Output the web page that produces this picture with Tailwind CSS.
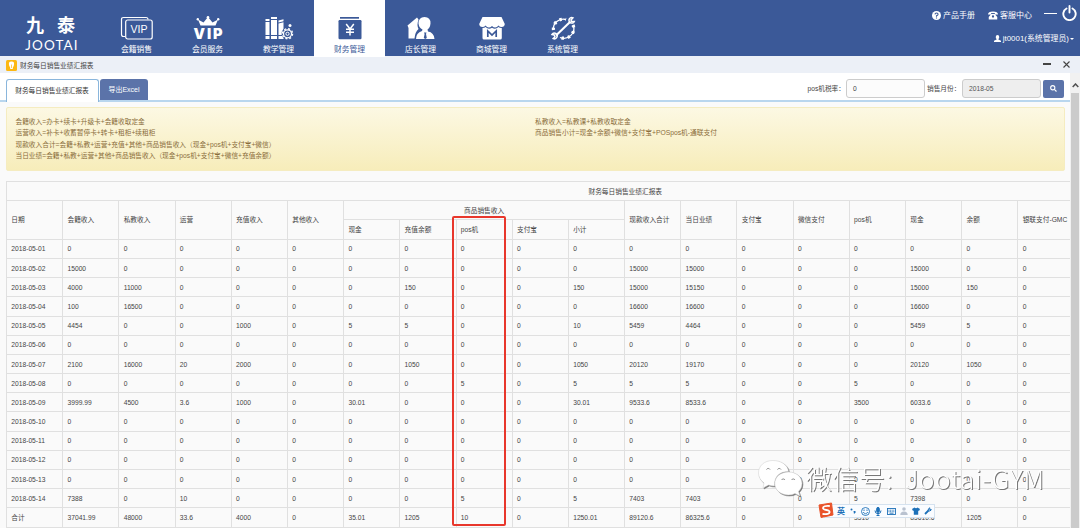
<!DOCTYPE html>
<html lang="zh-CN">
<head>
  <meta charset="UTF-8">
  <title>财务每日销售业绩汇报表</title>
  <script src="https://cdn.jsdelivr.net/npm/@tailwindcss/browser@4"></script>
</head>
<body class="relative w-[1080px] h-[528px] overflow-hidden bg-[#fafafa] font-['Liberation_Sans','Noto_Sans_CJK_SC',sans-serif] text-[6.7px] leading-[11px] text-[#444]">

  <!-- Header -->
  <header class="flex h-[56px] bg-[#3b5998] text-white">
    <div class="w-[101px] pt-[14px] text-center">
      <div class="flex justify-center gap-[13px] text-[18px] leading-[24px] font-bold"><span>九</span><span>泰</span></div>
      <div class="pl-[3px] text-[13.5px] leading-[14px] tracking-[1.1px] font-['Lato',sans-serif]">JOOTAI</div>
    </div>

    <!-- Main menu -->
    <nav class="flex text-[7.8px] leading-[10px]">
      <a class="flex w-[71px] flex-col items-center pt-[15px]">
        <svg class="h-[26px] w-[34px]" viewBox="0 0 34 26" fill="none" stroke="#fff" stroke-width="1.2">
          <path d="M5 21.500H3.500Q1.500 21.500 1.500 19.500V4.500Q1.500 2.500 3.500 2.500H26Q28 2.500 28 4.500"/>
          <rect x="5.700" y="5" width="26.500" height="19" rx="2"/>
          <text x="10.500" y="18" font-size="10.500" textLength="17" lengthAdjust="spacingAndGlyphs" fill="#fff" stroke="none">VIP</text>
        </svg>
        <span class="mt-[4px]">会籍销售</span>
      </a>
      <a class="flex w-[71px] flex-col items-center pt-[15px]">
        <svg class="h-[26px] w-[34px] overflow-visible" viewBox="0 0 34 26" fill="#fff">
          <path d="M7 4.500L12.500 7.500L17 2L21.500 7.500L27 4.500L24.500 10.500H9.500Z"/>
          <circle cx="6.800" cy="4.200" r="1.200"/><circle cx="17" cy="2.300" r="1.300"/><circle cx="27.200" cy="4.200" r="1.200"/>
          <text x="2.500" y="24" font-family="Inter" font-weight="900" font-size="14.500" textLength="29">VIP</text>
        </svg>
        <span class="mt-[4px]">会员服务</span>
      </a>
      <a class="flex w-[71px] flex-col items-center pt-[15px]">
        <svg class="h-[26px] w-[34px]" viewBox="0 0 34 26" fill="#fff">
          <path d="M3.500 4h4v2h-4zM3.500 7h4v13h-4zM3.500 21h4v3h-4zM9 2h6v2H9zM9 5h6v15H9zM9 21h6v3H9zM16.500 5.500l5-1.200v2l-5 1.200zM16.500 8.500l5-1.200v6.500q-2.500 3-1.800 6.200h-3.200zM16.500 21h3.700l1.600 3h-5.300z"/>
          <circle cx="25.500" cy="18.800" r="4" fill="none" stroke="#fff" stroke-width="1.200"/>
          <circle cx="25.500" cy="18.800" r="5.100" fill="none" stroke="#fff" stroke-width="1.300" stroke-dasharray="2 2"/>
          <circle cx="25.500" cy="18.800" r="1.600" fill="none" stroke="#fff"/>
          <circle cx="28" cy="10.500" r="1.500"/>
        </svg>
        <span class="mt-[4px]">教学管理</span>
      </a>
      <a class="flex h-[57px] w-[71px] flex-col items-center bg-white pt-[15px] text-[#3b5998]">
        <svg class="h-[26px] w-[34px]" viewBox="0 0 34 26" fill="#3b5998">
          <rect x="7" y="2" width="19" height="1.700"/>
          <rect x="5.500" y="5" width="23" height="19.300" rx="1.200"/>
          <path d="M13.200 9L17 14L20.800 9M17 14V20.500M13 14.300H21M13 17.300H21" fill="none" stroke="#fff" stroke-width="1.500"/>
        </svg>
        <span class="mt-[4px]">财务管理</span>
      </a>
      <a class="flex w-[71px] flex-col items-center pt-[15px]">
        <svg class="h-[26px] w-[34px]" viewBox="0 0 34 26" fill="#fff">
          <path d="M3.500 10.500L13 2.500L14.500 4.500Q12.500 10 14.500 14Q11 17 10.500 23.500H4.500V13Z"/>
          <path d="M14.500 8.500Q14.500 2 20.500 2Q26.700 2 26.500 8.500Q26 13 23.500 14.500L24 16.500Q30 17.500 30.500 24H12Q12 18 18 16L18.500 14.500Q15 13 14.500 8.500Z"/>
          <path d="M20 17.500h2.500l-.5 1.500.8 4-1.500 1-1.500-1 .8-4z" fill="#3b5998"/>
        </svg>
        <span class="mt-[4px]">店长管理</span>
      </a>
      <a class="flex w-[71px] flex-col items-center pt-[15px]">
        <svg class="h-[26px] w-[34px]" viewBox="0 0 34 26" fill="#fff">
          <path d="M7.500 2H26.500L29.800 9Q29.500 12 26.700 12Q24.500 12 23.500 10.500Q22 12.500 20.200 12.500Q18.500 12.500 17 11Q15.500 12.500 13.800 12.500Q12 12.500 10.500 10.500Q9.500 12 7.300 12Q4.500 12 4.200 9Z"/>
          <path d="M7.500 13Q9.500 13 10.500 12Q13.500 15 17 12.700Q20.500 15 23.500 12Q24.500 13 26.800 13V23Q26.800 24.500 25.300 24.500H9Q7.500 24.500 7.500 23Z"/>
          <path d="M12.800 22V16L17 20L21.200 16V22" fill="none" stroke="#3b5998" stroke-width="1.700"/>
        </svg>
        <span class="mt-[4px]">商城管理</span>
      </a>
      <a class="flex w-[71px] flex-col items-center pt-[15px]">
        <svg class="h-[26px] w-[34px]" viewBox="0 0 34 26" fill="none" stroke="#fff">
          <path d="M7.500 15A10 9.500 0 0 1 20 4.500M27 10A10 9.500 0 0 1 14 22.500" stroke-width="1.300"/>
          <path d="M7.500 15A10 9.500 0 0 1 20 4.500M27 10A10 9.500 0 0 1 14 22.500" stroke-width="3.200" stroke-dasharray="2.500 3.700"/>
          <path d="M10 20.500L24.500 6.500" stroke-width="2.100"/>
          <path d="M27 2.800A2.800 2.800 0 1 0 28.300 6.500L25.500 6.300L25 5Z" stroke-width="1.500"/>
          <path d="M6 19.500A2.800 2.800 0 1 1 7.200 23.500L9 21.800L8.200 20Z" stroke-width="1.500"/>
        </svg>
        <span class="mt-[4px]">系统管理</span>
      </a>
    </nav>

    <!-- User links -->
    <div class="ml-auto flex flex-col items-end pr-[3px] text-[8px]">
      <div class="flex h-[30px] items-center">
        <svg class="mr-[2px] h-[9px] w-[9px]" viewBox="0 0 16 16"><circle cx="8" cy="8" r="8" fill="#fff"/><path d="M5.300 6Q5.500 3.500 8 3.500Q10.800 3.500 10.700 6Q10.600 7.300 8 8.500V10M8 11.500V13.500" fill="none" stroke="#3b5998" stroke-width="2"/></svg>
        <span>产品手册</span>
        <svg class="mr-[2px] ml-[13px] h-[9px] w-[10px]" viewBox="0 0 20 18" fill="#fff"><path d="M0 7Q0 1 10 1Q20 1 20 7H14V4.500Q10 3.500 6 4.500V7ZM6.500 6H13.500L18.500 12V17H1.500V12Z"/><circle cx="10" cy="11" r="2.300" fill="#3b5998"/></svg>
        <span>客服中心</span>
        <span class="mb-[3px] ml-[12px] h-[1.500px] w-[13px] bg-white"></span>
        <svg class="ml-[5px] mb-[5px] h-[16px] w-[15px]" viewBox="0 0 15 16" fill="none" stroke="#fff" stroke-width="1.900" stroke-linecap="round"><path d="M4.500 3.500A6.200 6.200 0 1 0 10.500 3.500M7.500 1V7.500"/></svg>
      </div>
      <div class="flex h-[17px] items-center pr-[3px]">
        <svg class="mr-[2px] h-[7px] w-[7px]" viewBox="0 0 14 14" fill="#fff"><path d="M7 0Q10.500 0 10.500 4Q10.500 6.500 8.800 8V9L14 11.500V14H0V11.500L5.200 9V8Q3.500 6.500 3.500 4Q3.500 0 7 0Z"/></svg>
        <span class="text-[7.900px]">jt0001(系统管理员)</span>
        <span class="ml-[1px] border-x-2 border-t-2 border-x-transparent border-t-white"></span>
      </div>
    </div>
  </header>

  <!-- Page title -->
  <div class="flex h-[17px] items-center bg-[#ecf0f7] pr-[10px] pl-[6px]">
    <svg class="mt-[2px] h-[11px] w-[11px]" viewBox="0 0 11 11"><rect width="11" height="11" rx="1.500" fill="#fcb813"/><path d="M4.300 9Q4.300 7.200 3.300 6Q1.800 1.600 5.500 1.600Q9.200 1.600 7.700 6Q6.700 7.200 6.700 9Z" fill="#fff"/><path d="M5.500 4.500V8" stroke="#fcb813" stroke-width=".7"/></svg>
    <span class="ml-[3px] mt-[2px]">财务每日销售业绩汇报表</span>
    <span class="ml-auto mb-px h-[1.200px] w-[8px] bg-[#444]"></span>
    <svg class="ml-[12px] mb-px h-[7px] w-[7px]" viewBox="0 0 7 7" stroke="#444" stroke-width="1.100"><path d="M.5 .5L6.500 6.500M6.500 .5L.5 6.500"/></svg>
  </div>

  <div class="flex h-[455px]">
    <main class="w-[1070px] overflow-hidden">
      <!-- Tabs and filters -->
      <div class="flex h-[29px] items-end border-b-2 border-[#b9d6ee] bg-white pl-[6px]">
        <div class="-mb-[2px] flex h-[23px] w-[93px] items-center justify-center rounded-t-[3px] border border-b-0 border-[#8ab6dc] bg-white pr-[1px] pb-[1px] text-[#333]">财务每日销售业绩汇报表</div>
        <div class="ml-px flex h-[21.500px] w-[48px] items-center justify-center rounded-t-[3px] bg-[#5b73a9] text-[7px] text-white">导出Excel</div>
        <div class="mb-[2px] ml-auto flex h-[19px] items-center pr-[6px]">
          <span class="mr-[1px]">pos机税率：</span>
          <div class="flex h-[19px] w-[79px] items-center rounded-[3px] border border-[#ccc] bg-[#fcfcfc] pl-[6px]">0</div>
          <span class="ml-[2px] w-[35px] whitespace-nowrap">销售月份：</span>
          <div class="flex h-[19px] w-[79px] items-center rounded-[3px] border border-[#ccc] bg-[#eee] pl-[6px] text-[#555]">2018-05</div>
          <div class="ml-[2px] flex h-[18px] w-[21px] items-center justify-center rounded-[2px] bg-[#5b73a9]">
            <svg class="h-[7px] w-[7px]" viewBox="0 0 14 14" fill="none" stroke="#fff" stroke-width="2.200"><circle cx="5.500" cy="5.500" r="4.200"/><path d="M8.700 8.700L13 13"/></svg>
          </div>
        </div>
      </div>

      <!-- Formula notes -->
      <div class="mt-[4.500px] ml-[6px] flex h-[64px] w-[1059px] rounded-[2px] border border-[#f5ecc0] bg-gradient-to-b from-[#fcf8e3] to-[#f7edba] pt-[8.600px] pl-[8.500px] leading-[11.300px] text-[#8a6d3b]">
        <div class="w-[519.500px]">
          <p>会籍收入=办卡+续卡+升级卡+会籍收取定金</p>
          <p>运营收入=补卡+收蓄暂停卡+转卡+租柜+续租柜</p>
          <p>现款收入合计=会籍+私教+运营+充值+其他+商品销售收入（现金+pos机+支付宝+微信）</p>
          <p>当日业绩=会籍+私教+运营+其他+商品销售收入（现金+pos机+支付宝+微信+充值余额）</p>
        </div>
        <div class="text-[6.750px]">
          <p>私教收入=私教课+私教收取定金</p>
          <p>商品销售小计=现金+余额+微信+支付宝+POSpos机-通联支付</p>
        </div>
      </div>

      <!-- Report table, wider than the window -->
      <div class="mt-[10.500px] ml-[6px] w-[1237.500px] border-t border-l border-[#e0e0e0]">
        <div class="flex h-[19.200px] items-center justify-center border-b border-[#e0e0e0]">财务每日销售业绩汇报表</div>
        <div id="head" class="grid grid-cols-[repeat(22,56.200px)] grid-rows-[19px_19.600px]"></div>
        <div id="rows"></div>
      </div>
    </main>

    <!-- Scrollbar -->
    <div class="flex w-[10px] flex-col bg-[#f1f1f1]">
      <div class="flex h-[20px] items-end justify-center pb-[5px]">
        <svg class="h-[5px] w-[7px]" viewBox="0 0 7 5" fill="none" stroke="#505050" stroke-width="1.500"><path d="M.7 4L3.500 1L6.300 4"/></svg>
      </div>
      <div class="ml-[1px] w-[8px] flex-1 bg-[#cbcbcb]"></div>
    </div>
  </div>

  <!-- Highlight on the pos column -->
  <div class="absolute top-[216px] left-[452px] h-[310px] w-[54px] rounded-[2px] border-2 border-[#e8372c]"></div>

  <!-- WeChat mark -->
  <svg class="absolute top-[455px] left-[755px] h-[48px] w-[300px] drop-shadow-[1px_1px_0.500px_#777]" viewBox="0 0 300 48" fill="#fff">
    <path d="M18 5.500C9 5.500 3.500 11 3.500 18C3.500 22 5.500 25.500 9 28L8 33L13.500 30Q16 31 19.500 31C19 21 25 16.500 33.500 16.500C33 10 26 5.500 18 5.500Z" stroke="#ccc" stroke-width=".5"/>
    <path d="M33.500 17C25.500 17 19.800 22 19.800 28.500C19.800 35 25.500 40 33.500 40Q37 40 40 38.500L45 41L43.500 36.500Q47 33 47 28.500C47 22 41.500 17 33.500 17Z" stroke="#ccc" stroke-width=".5"/>
    <g fill="none" stroke="#888" stroke-width="1"><path d="M11.500 14.500a2 2 0 0 1 3.500 0M22.500 14.500a2 2 0 0 1 3.500 0M26.500 25a2 2 0 0 1 3.500 0M36.500 25a2 2 0 0 1 3.500 0"/></g>
    <g font-family="Noto Sans CJK SC" font-weight="300" font-size="26">
      <text x="51" y="34" textLength="79">微信号</text>
      <text x="131" y="34">:</text>
      <text x="150" y="34" textLength="139">Jootai-GYM</text>
    </g>
  </svg>

  <!-- Input method bar -->
  <div class="absolute top-[504px] left-[824px] flex h-[14px] w-[111px] items-center justify-between border border-[#d5e2ef] bg-[#fafcff] pr-[2px] pl-[12px] text-[8px] font-bold text-[#1d70b8]">
    <svg class="absolute -top-[3px] -left-[7px] h-[16px] w-[16px]" viewBox="0 0 16 16"><path d="M1 3L13.500 1L15 13L3 15.500Z" fill="#e9532a" stroke="#e9532a" stroke-linejoin="round"/><path d="M11.800 4Q5 3.500 5 6Q5 7.500 8.500 8Q12 8.500 11.500 10.500Q11 12.500 4.500 12" fill="none" stroke="#fff" stroke-width="1.800"/></svg>
    <span>英</span>
    <svg class="h-[8px] w-[8px]" viewBox="0 0 8 8" fill="#1d70b8"><circle cx="2.500" cy="2.500" r="1"/><path d="M4.500 4h2v1.500L5 7z"/></svg>
    <svg class="h-[9px] w-[9px]" viewBox="0 0 9 9" fill="none" stroke="#1d70b8" stroke-width=".9"><circle cx="4.500" cy="4.500" r="4"/><path d="M3 2.500V4M6 2.500V4M2.200 5Q4.500 8.500 6.800 5"/></svg>
    <svg class="h-[9px] w-[8px]" viewBox="0 0 8 9" fill="none" stroke="#1d70b8"><rect x="2.700" y=".4" width="2.600" height="5" rx="1.300" fill="#1d70b8"/><path d="M1 3.500Q1 6.700 4 6.700Q7 6.700 7 3.500M4 6.700V8.500M2.500 8.500H5.500"/></svg>
    <svg class="h-[7px] w-[9px]" viewBox="0 0 9 7" fill="none" stroke="#1d70b8" stroke-width=".9"><rect x=".5" y=".5" width="8" height="6"/><path d="M1.500 2.200H7.500M1.500 3.700H7.500" stroke-dasharray="1 .6"/><path d="M2.500 5.200H6.500"/></svg>
    <svg class="h-[8px] w-[8px]" viewBox="0 0 8 8" fill="#b9c2d0"><circle cx="4" cy="2" r="1.800"/><path d="M.3 8Q.3 4.500 4 4.500Q7.700 4.500 7.700 8Z"/></svg>
    <svg class="h-[8px] w-[8px]" viewBox="0 0 8 8" fill="#1d70b8"><path d="M2.500 .5Q4 2 5.500 .5L8 2L7 4L6.200 3.500V7.700H1.800V3.500L1 4L0 2Z"/></svg>
    <svg class="h-[8px] w-[8px]" viewBox="0 0 8 8" fill="none" stroke="#1d70b8"><path d="M1 7L4.500 3.500" stroke-width="1.800"/><path d="M5.800 .8Q3.800 1.500 4.300 3.500Q6 5 7.400 2.700L5.700 2.700Z"/></svg>
  </div>

<script>
  const single = "h-full row-span-2 flex items-center border-r border-b border-[#e0e0e0] pl-[4.300px] whitespace-nowrap";
  const sub = "flex items-center border-r border-b border-[#e0e0e0] pl-[4.300px] whitespace-nowrap";
  const group = "col-span-5 flex items-center justify-center border-r border-b border-[#e0e0e0]";

  function add(parent, cls, text) {
    const el = document.createElement("div");
    el.className = cls;
    el.textContent = text;
    parent.appendChild(el);
    return el;
  }

  const head = document.getElementById("head");
  ["日期", "会籍收入", "私教收入", "运营", "充值收入", "其他收入"].forEach(t => add(head, single, t));
  add(head, group, "商品销售收入");
  ["现款收入合计", "当日业绩", "支付宝", "微信支付", "pos机", "现金", "余额", "银联支付-GMC", "", "", ""].forEach(t => add(head, single, t));
  ["现金", "充值余额", "pos机", "支付宝", "小计"].forEach(t => add(head, sub, t));

  const data = [
    "2018-05-01 0 0 0 0 0 0 0 0 0 0 0 0 0 0 0 0 0 0",
    "2018-05-02 15000 0 0 0 0 0 0 0 0 0 15000 15000 0 0 0 15000 0 0",
    "2018-05-03 4000 11000 0 0 0 0 150 0 0 150 15000 15150 0 0 0 15000 150 0",
    "2018-05-04 100 16500 0 0 0 0 0 0 0 0 16600 16600 0 0 0 16600 0 0",
    "2018-05-05 4454 0 0 1000 0 5 5 0 0 10 5459 4464 0 0 0 5459 5 0",
    "2018-05-06 0 0 0 0 0 0 0 0 0 0 0 0 0 0 0 0 0 0",
    "2018-05-07 2100 16000 20 2000 0 0 1050 0 0 1050 20120 19170 0 0 0 20120 1050 0",
    "2018-05-08 0 0 0 0 0 0 0 5 0 5 5 5 0 0 5 0 0 0",
    "2018-05-09 3999.99 4500 3.6 1000 0 30.01 0 0 0 30.01 9533.6 8533.6 0 0 3500 6033.6 0 0",
    "2018-05-10 0 0 0 0 0 0 0 0 0 0 0 0 0 0 0 0 0 0",
    "2018-05-11 0 0 0 0 0 0 0 0 0 0 0 0 0 0 0 0 0 0",
    "2018-05-12 0 0 0 0 0 0 0 0 0 0 0 0 0 0 0 0 0 0",
    "2018-05-13 0 0 0 0 0 0 0 0 0 0 0 0 0 0 0 0 0 0",
    "2018-05-14 7388 0 10 0 0 0 0 5 0 5 7403 7403 0 0 5 7398 0 0",
    "合计 37041.99 48000 33.6 4000 0 35.01 1205 10 0 1250.01 89120.6 86325.6 0 0 3510 85610.6 1205 0"
  ];
  const rows = document.getElementById("rows");
  data.forEach(line => {
    const row = add(rows, "grid h-[19.200px] grid-cols-[repeat(22,56.200px)]", "");
    line.split(" ").forEach(v => add(row, sub, v));
  });
</script>
</body>
</html>
